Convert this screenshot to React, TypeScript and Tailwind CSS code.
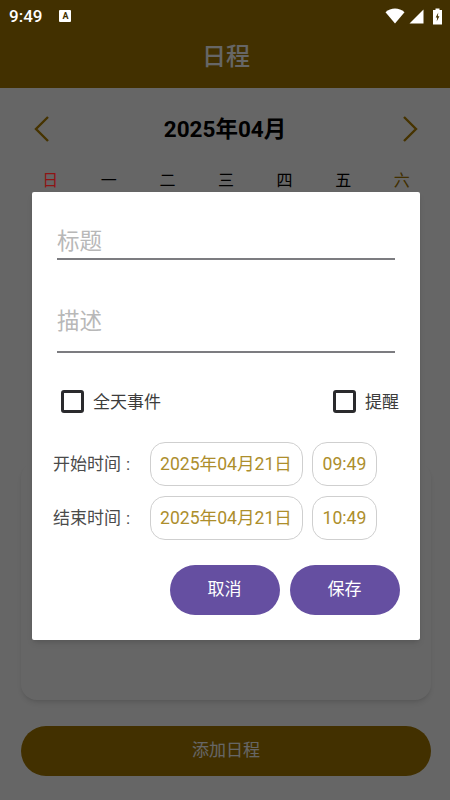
const weekDays = ["日", "一", "二", "三", "四", "五", "六"];
const fontStack = "font-['Roboto','Noto_Sans_CJK_SC',sans-serif]";

function StatusBar() {
  return (
    <div className="relative z-20 flex h-[32px] items-center pl-[9px] pr-[7px] text-white">
      <span className="text-[17px] leading-none font-medium">9:49</span>
      <div className="ml-[17px] flex h-[12px] w-[12px] items-center justify-center rounded-[1px] bg-white">
        <span className="text-[9px] leading-none font-bold text-[#423000]">A</span>
      </div>
      <div className="ml-auto flex items-center gap-[4px]">
        <svg width="20" height="16" viewBox="0 0 20 16" fill="white">
          <path d="M0.5 4.2 C5.8 -0.6 14.2 -0.6 19.5 4.2 L10 15.5 Z" />
        </svg>
        <svg width="15" height="15" viewBox="0 0 15 15" fill="white">
          <path d="M0.5 14.5 L14.5 0.5 V14.5 Z" />
        </svg>
        <svg className="ml-[4px]" width="11" height="17" viewBox="0 0 11 17">
          <path fill="white" d="M3.5 0.5 H7.5 V2 H10 V16.5 H1 V2 H3.5 Z" />
          <path fill="#423000" d="M6.3 4.5 L3.7 9.6 H5.2 L4.7 13.6 L7.4 8.2 H5.8 Z" />
        </svg>
      </div>
    </div>
  );
}

function Chevron({ right }: { right?: boolean }) {
  return (
    <svg width="16" height="26" viewBox="0 0 16 26" fill="none" stroke="#b08000" strokeWidth="2.4">
      <path d={right ? "M2 1 L14 13 L2 25" : "M14 1 L2 13 L14 25"} />
    </svg>
  );
}

function CheckItem({ label }: { label: string }) {
  return (
    <div className="flex items-center">
      <div className="h-[23px] w-[23px] rounded-[3px] border-[3px] border-[#2a2a2d]" />
      <span className="relative top-[1px] ml-[9px] text-[17px] text-[#3c3c3c]">{label}</span>
    </div>
  );
}

function TimeRow({ label, date, time }: { label: string; date: string; time: string }) {
  return (
    <div className="-ml-[4px] flex items-center">
      <span className="w-[97px] pt-[2px] text-[17px] whitespace-nowrap text-[#4a4a4a]">
        {label}
        <span className="ml-[5px]">:</span>
      </span>
      <div className="flex h-[44px] w-[153px] items-center justify-center rounded-[15px] border border-[#cfcfcf] pt-[2px] pr-[1px] text-[17.6px] text-[#ad8e2c]">
        {date}
      </div>
      <div className="ml-[9px] flex h-[44px] w-[65px] items-center justify-center rounded-[15px] border border-[#cfcfcf] pt-[2px] text-[17.6px] text-[#ad8e2c]">
        {time}
      </div>
    </div>
  );
}

export default function App() {
  return (
    <div className={`relative h-[800px] w-[450px] overflow-hidden bg-white ${fontStack}`}>
      <div className="h-[88px] bg-[#a57800]">
        <StatusBar />
        <div className="pl-[2px] text-center text-[24px] leading-[50px] font-medium text-white">日程</div>
      </div>

      <div className="pr-[19px] pl-[21px]">
        <div className="mt-[20px] flex h-[41px] items-center justify-between px-[13px]">
          <Chevron />
          <span className="pt-[2px] pr-[2px] text-[22.5px] font-bold text-black">2025年04月</span>
          <Chevron right />
        </div>
        <div className="mt-[20px] grid grid-cols-7 text-center text-[16px] leading-[24px]">
          {weekDays.map((d, i) => (
            <span
              key={d}
              className={i === 0 ? "relative z-20 text-[#8f1414]" : i === 6 ? "text-[#a57800]" : "text-black"}
            >
              {d}
            </span>
          ))}
        </div>
        <div className="mt-[269px] h-[238px] rounded-[16px] bg-white shadow-md" />
        <button className="mt-[26px] h-[50px] w-full rounded-full bg-[#a57800] text-[17px] text-white">添加日程</button>
      </div>

      <div className="absolute inset-0 z-10 flex items-start justify-center bg-black/60 pt-[192px] pl-[2px]">
        <div className="h-[448px] w-[388px] rounded-[2px] bg-white px-[25px] pt-[22px] shadow-md">
          <div className="h-[46px] border-b-2 border-[#7c7c80] text-[22.5px] leading-[54px] text-[#b8b8b8]">标题</div>
          <div className="mt-[39px] h-[54px] border-b-2 border-[#7c7c80] text-[22.5px] leading-[44px] text-[#b8b8b8]">描述</div>
          <div className="mt-[36px] -mr-[4px] flex items-center justify-between pl-[4px]">
            <CheckItem label="全天事件" />
            <CheckItem label="提醒" />
          </div>
          <div className="mt-[27px] flex flex-col gap-[10px]">
            <TimeRow label="开始时间" date="2025年04月21日" time="09:49" />
            <TimeRow label="结束时间" date="2025年04月21日" time="10:49" />
          </div>
          <div className="mt-[25px] -mr-[5px] flex justify-end gap-[10px]">
            <button className="h-[50px] w-[110px] rounded-full bg-[#654fa1] pr-[1px] text-[17px] text-white">取消</button>
            <button className="h-[50px] w-[110px] rounded-full bg-[#654fa1] pr-[1px] text-[17px] text-white">保存</button>
          </div>
        </div>
      </div>
    </div>
  );
}
